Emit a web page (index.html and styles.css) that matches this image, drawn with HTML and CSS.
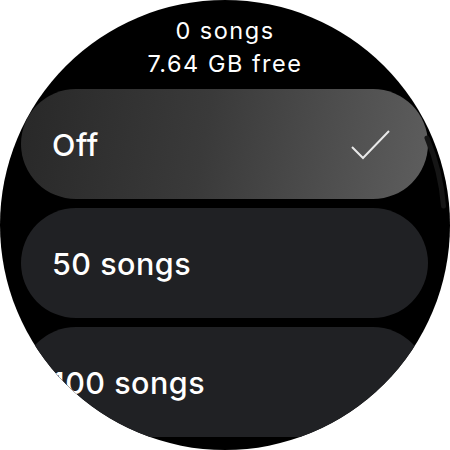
FILE: index.html
```html
<!DOCTYPE html>
<html lang="en">

<head>
    <meta charset="UTF-8">
    <meta name="viewport" content="width=device-width, initial-scale=1.0">
    <title>Download songs</title>
    <link rel="stylesheet" href="styles.css">
</head>

<body>
    <div class="watch">
        <div class="summary">
            <p>0 songs</p>
            <p>7.64 GB free</p>
        </div>
        <ul class="options">
            <li class="chip selected">
                <span class="label">Off</span>
                <svg class="check" width="40" height="40" viewBox="0 0 40 40">
                    <polyline points="2,23 13,34 39,7" fill="none" stroke="#e8e8e8" stroke-width="2" />
                </svg>
            </li>
            <li class="chip">
                <span class="label">50 songs</span>
            </li>
            <li class="chip">
                <span class="label">100 songs</span>
            </li>
        </ul>
        <!-- scroll position indicator -->
        <svg class="scrollbar" width="450" height="450" viewBox="0 0 450 450">
            <path d="M 427 138 A 220 220 0 0 1 443.5 206" fill="none" stroke="#151515" stroke-width="5" stroke-linecap="round" />
        </svg>
    </div>
</body>

</html>
```

FILE: styles.css
```css
body {
    margin: 0;
    background: #ffffff;
    font-family: 'Inter', sans-serif;
}

.watch {
    position: relative;
    width: 450px;
    height: 450px;
    border-radius: 50%;
    background: #000000;
    overflow: hidden;
    color: #ffffff;
}

.summary {
    height: 89px;
    box-sizing: border-box;
    padding-top: 14px;
    text-align: center;
}

.summary p {
    margin: 0;
    font-size: 23.5px;
    line-height: 33px;
    letter-spacing: 1.5px;
}

.options {
    list-style: none;
    margin: 0;
    padding: 0 22px 0 21px;
    display: flex;
    flex-direction: column;
    gap: 9px;
}

.chip {
    height: 110px;
    flex-shrink: 0;
    border-radius: 55px;
    background: #202124;
    display: flex;
    align-items: center;
    justify-content: space-between;
    padding: 0 38px 0 31px;
}

.chip.selected {
    background: linear-gradient(100deg, #282828 0%, #3a3a3a 45%, #5e5e5e 100%);
}

.label {
    font-size: 30.5px;
    font-weight: 500;
    letter-spacing: 0.5px;
}

.check {
    display: block;
}

.scrollbar {
    position: absolute;
    top: 0;
    left: 0;
}
```
